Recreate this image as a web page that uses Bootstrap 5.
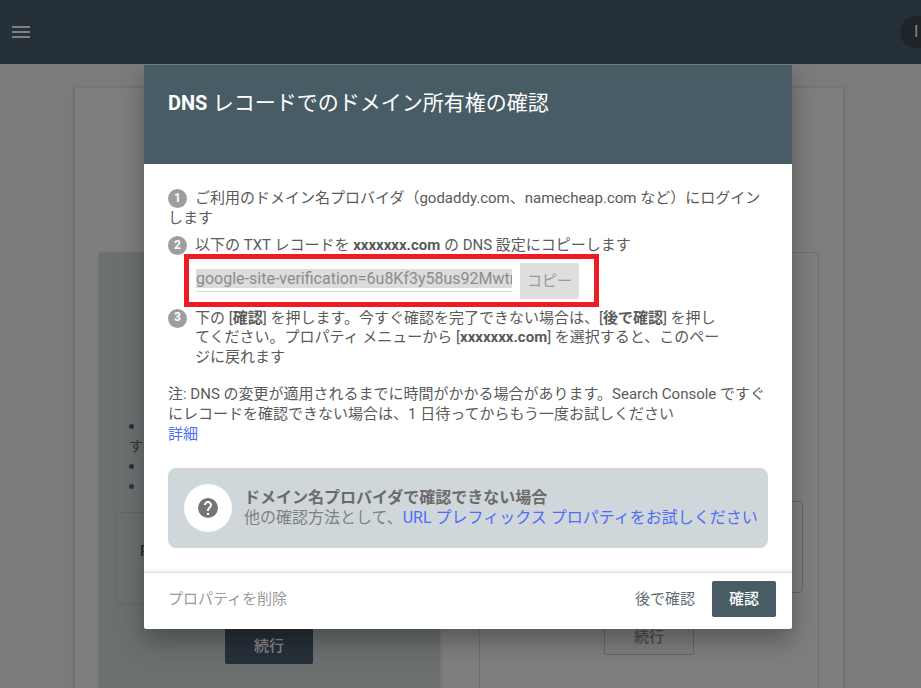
<!DOCTYPE html>
<html lang="ja">
<head>
<meta charset="UTF-8">
<meta name="viewport" content="width=device-width, initial-scale=1.0">
<title>DNS レコードでのドメイン所有権の確認</title>
<link href="https://cdn.jsdelivr.net/npm/bootstrap@5.3.0/dist/css/bootstrap.min.css" rel="stylesheet">
<style>
html, body { height: 100%; overflow: hidden; }
body { background: #7b7b7b; font-family: Roboto, "Noto Sans CJK JP", sans-serif; font-size: 15px; line-height: 20px; color: #5a5a5a; position: relative; }
.top-bar { height: 64px; background: #263038; padding-left: 12px; }
.burger { width: 18px; height: 12px; display: block; }
.avatar-dot { width: 40px; height: 32px; background: #1f2428; border-radius: 16px 0 0 16px; color: #888; font-size: 16px; line-height: 32px; padding-left: 14px; margin-right: -19px; }
.back-sheet { width: 768px; height: 624px; margin: 24px 0 0 75px; background: #7e7e7e; box-shadow: 0 1px 4px rgba(0,0,0,.25); padding: 164px 24px 0; overflow: hidden; }
.back-left { width: 341px; height: 460px; background: #6b6f70; border-radius: 4px; padding: 260px 16px 0; box-shadow: 0 1px 3px rgba(0,0,0,.2); }
.back-right { width: 340px; height: 460px; border: 1px solid #6f6f6f; border-radius: 4px; padding: 248px 15px 0 30px; }
.back-input { height: 92px; border: 1px solid #666; border-radius: 4px; color: #2b2b2b; font-weight: 500; padding: 28px 24px; }
.back-btn-solid { width: 88px; height: 36px; background: #263038; border-radius: 2px; color: #8a8a8a; font-weight: 500; margin: 24px 0 0 110px; }
.back-btn-line { width: 90px; height: 36px; border: 1px solid #666; border-radius: 2px; color: #4d4d4d; font-weight: 500; margin: 26px auto 0 94px; }
.back-bullet { width: 5px; height: 5px; border-radius: 50%; background: #2d3338; position: absolute; left: 129px; }
.back-text { position: absolute; left: 129px; top: 436px; color: #333; font-size: 14px; }
.dialog { position: absolute; left: 144px; top: 65px; width: 648px; height: 564px; background: #fff; border-radius: 2px; box-shadow: 0 -1px 0 #777, 0 12px 24px rgba(0,0,0,.3); }
.dialog-head { height: 99px; background: #485c65; color: #fff; font-size: 21px; line-height: 28px; padding: 24px 24px 0; }
.dialog-head b { font-size: 20px; }
.dialog-body { height: 408px; padding: 25px 24px 0; overflow: hidden; line-height: 19.5px; }
.step-row { margin-bottom: 8px; width: 600px; }
.step-row.has-copy { margin-bottom: 10px; }
.step-num { display: inline-flex; width: 19px; height: 19px; border-radius: 50%; background: #9e9e9e; color: #fff; font-size: 12px; font-weight: 700; align-items: center; justify-content: center; margin-right: 8px; vertical-align: top; text-indent: 0; }
.step-hang { padding-left: 27px; text-indent: -27px; width: 557px; }
.copy-area { margin: 7px 0 0 28px; height: 36px; }
.copy-input { width: 316px; height: 23px; border-bottom: 1px solid #dcdcdc; overflow: hidden; white-space: nowrap; font-size: 16px; line-height: 20px; color: #8c8c8c; }
.copy-input span { background: #dcdcdc; }
.copy-btn { width: 59px; height: 36px; background: #dedede; border-radius: 2px; color: #9a9a9a; line-height: 36px; text-align: center; margin-left: 8px; }
.red-box { position: absolute; left: 40px; top: 189px; width: 415px; height: 53px; border: 5px solid #ed1c24; }
.note-text { margin-top: 17px; line-height: 20px; }
.blue-link { color: #4f6cf7; text-decoration: none; }
.help-box { height: 80px; margin-top: 24px; width: 600px; background: #d0d7db; border-radius: 8px; padding: 16px; gap: 12px; font-size: 16px; line-height: 20px; }
.help-circle { width: 48px; height: 48px; border-radius: 50%; background: #fff; flex: none; }
.help-title { font-weight: 700; color: #6b6b6b; }
.help-sub { color: #7d8184; white-space: nowrap; }
.dialog-foot { height: 57px; border-top: 1px solid #e0e0e0; box-shadow: 0 -2px 3px rgba(0,0,0,.06); padding: 0 16px 4px 24px; }
.delete-link { color: #9a9a9a; }
.later-link { color: #5f6b72; }
.confirm-btn { width: 64px; height: 36px; background: #485c65; border-radius: 2px; color: #fff; font-weight: 500; margin-left: 17px; padding: 0; border: 0; font-size: 15px; }
</style>
</head>
<body>
<div class="top-bar d-flex align-items-center justify-content-between">
    <svg class="burger" viewBox="0 0 18 12"><path fill="#7c8185" d="M0 0h18v2H0zM0 5h18v2H0zM0 10h18v2H0z"/></svg>
    <div class="avatar-dot">I</div>
</div>
<div class="back-sheet d-flex justify-content-between">
    <div class="back-left">
        <div class="back-input">P</div>
        <div class="back-btn-solid d-flex align-items-center justify-content-center">続行</div>
    </div>
    <div class="back-right">
        <div class="back-input"></div>
        <div class="back-btn-line d-flex align-items-center justify-content-center">続行</div>
    </div>
</div>
<div class="back-bullet" style="top:424px"></div>
<div class="back-text">す</div>
<div class="back-bullet" style="top:464px"></div>
<div class="back-bullet" style="top:484px"></div>

<div class="dialog">
    <div class="dialog-head"><b>DNS</b> レコードでのドメイン所有権の確認</div>
    <div class="dialog-body">
        <div class="step-row"><span class="step-num">1</span>ご利用のドメイン名プロバイダ（godaddy.com、namecheap.com など）にログインします</div>
        <div class="step-row has-copy">
            <span class="step-num">2</span>以下の TXT レコードを <b>xxxxxxx.com</b> の DNS 設定にコピーします
            <div class="copy-area d-flex align-items-center">
                <div class="copy-input"><span>google-site-verification=6u8Kf3y58us92MwtrxQpLd0</span></div>
                <div class="copy-btn">コピー</div>
            </div>
        </div>
        <div class="step-hang"><span class="step-num">3</span>下の [<b>確認</b>] を押します。今すぐ確認を完了できない場合は、[<b>後で確認</b>] を押してください。プロパティ メニューから [<b>xxxxxxx.com</b>] を選択すると、このページに戻れます</div>
        <div class="note-text">注: DNS の変更が適用されるまでに時間がかかる場合があります。Search Console ですぐにレコードを確認できない場合は、1 日待ってからもう一度お試しください<br><a class="blue-link" href="#">詳細</a></div>
        <div class="help-box d-flex align-items-center">
            <div class="help-circle d-flex align-items-center justify-content-center">
                <svg width="24" height="24" viewBox="0 0 24 24"><path fill="#757575" d="M12 2a10 10 0 1 0 0 20 10 10 0 0 0 0-20zm1 17h-2v-2h2v2zm2.070-7.750-.9.920C13.450 12.900 13 13.500 13 15h-2v-.5c0-1.100.45-2.100 1.170-2.830l1.240-1.260c.37-.36.590-.86.590-1.410 0-1.100-.9-2-2-2s-2 .9-2 2H8c0-2.210 1.790-4 4-4s4 1.790 4 4c0 .88-.36 1.680-.93 2.250z"/></svg>
            </div>
            <div>
                <div class="help-title">ドメイン名プロバイダで確認できない場合</div>
                <div class="help-sub">他の確認方法として、<a class="blue-link" href="#">URL プレフィックス プロパティをお試しください</a></div>
            </div>
        </div>
    </div>
    <div class="dialog-foot d-flex align-items-center">
        <span class="delete-link me-auto">プロパティを削除</span>
        <span class="later-link">後で確認</span>
        <button class="confirm-btn" type="button">確認</button>
    </div>
    <div class="red-box"></div>
</div>
</body>
</html>
